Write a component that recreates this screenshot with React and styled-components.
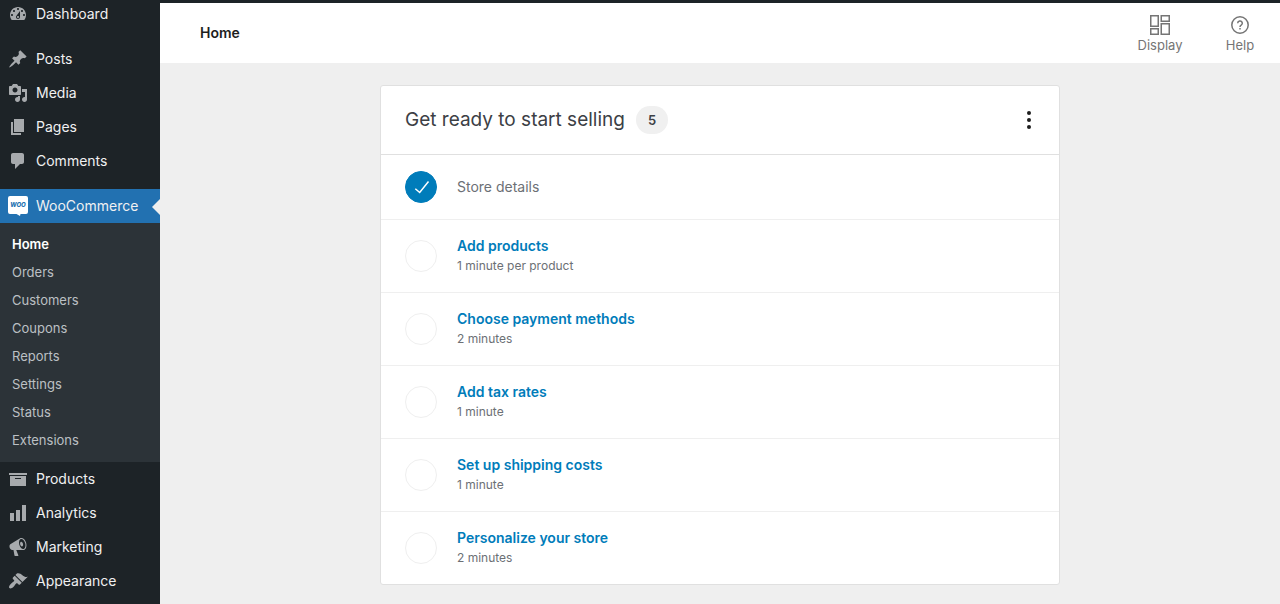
import React from 'react';
import styled, { createGlobalStyle } from 'styled-components';

const GlobalStyle = createGlobalStyle`
  * {
    box-sizing: border-box;
  }

  body {
    margin: 0;
    background: #efefef;
    font-family: Inter, "Liberation Sans", sans-serif;
  }
`;

// 20x20 menu icons
const icons = {
  dashboard: 'M3.76 16h12.48c1.1-1.37 1.76-3.11 1.76-5 0-4.42-3.58-8-8-8s-8 3.58-8 8c0 1.89.66 3.63 1.76 5zM10 4c.55 0 1 .45 1 1s-.45 1-1 1-1-.45-1-1 .45-1 1-1zM6 6c.55 0 1 .45 1 1s-.45 1-1 1-1-.45-1-1 .45-1 1-1zm8 0c.55 0 1 .45 1 1s-.45 1-1 1-1-.45-1-1 .45-1 1-1zm-5.37 5.55L12 7v6c0 1.1-.9 2-2 2s-2-.9-2-2c0-.57.24-1.08.63-1.45zM4 10c.55 0 1 .45 1 1s-.45 1-1 1-1-.45-1-1 .45-1 1-1zm12 0c.55 0 1 .45 1 1s-.45 1-1 1-1-.45-1-1 .45-1 1-1zm-5 3c0-.55-.45-1-1-1s-1 .45-1 1 .45 1 1 1 1-.45 1-1z',
  posts: 'M10.44 3.02l1.82-1.82 6.36 6.35-1.83 1.82c-1.05-.68-2.48-.57-3.41.36l-.75.75c-.92.93-1.04 2.35-.35 3.41l-1.83 1.82-2.41-2.41-2.8 2.79c-.42.42-3.38 2.71-3.8 2.29s1.86-3.39 2.28-3.81l2.79-2.79L4.1 9.36l1.83-1.82c1.05.69 2.48.57 3.4-.36l.75-.75c.93-.92 1.05-2.35.36-3.41z',
  media: 'M13 11V4c0-.55-.45-1-1-1h-1.67L9 1H5L3.67 3H2c-.55 0-1 .45-1 1v7c0 .55.45 1 1 1h10c.55 0 1-.45 1-1zM7 4.5c1.38 0 2.5 1.12 2.5 2.5S8.38 9.5 7 9.5 4.5 8.38 4.5 7 5.62 4.5 7 4.5zM14 6h5v10.5c0 1.38-1.12 2.5-2.5 2.5S14 17.88 14 16.5s1.12-2.5 2.5-2.5c.17 0 .34.02.5.05V9h-3V6zm-4 8.05V13h2v3.5c0 1.38-1.12 2.5-2.5 2.5S7 17.88 7 16.5 8.12 14 9.5 14c.17 0 .34.02.5.05z',
  pages: 'M6 15V2h10v13H6zm-1 1h8v2H3V5h2v11z',
  comments: 'M5 2h9c1.1 0 2 .9 2 2v7c0 1.1-.9 2-2 2h-2l-5 5v-5H5c-1.1 0-2-.9-2-2V4c0-1.1.9-2 2-2z',
  products: 'M19 4v2H1V4h18zM2 7h16v10H2V7zm11 3V9H7v1h6z',
  analytics: 'M18 18V2h-4v16h4zm-6 0V7H8v11h4zm-6 0v-8H2v8h4z',
  marketing: 'M18.15 5.94c.46 1.62.38 3.22-.02 4.48-.42 1.28-1.26 2.18-2.3 2.48-.16.06-.26.06-.4.06-.06.02-.12.02-.18.02-.06.02-.14.02-.22.02h-6.8l2.22 5.5c.02.14-.06.26-.14.34-.08.1-.24.16-.34.16H6.95c-.1 0-.26-.06-.34-.16-.08-.08-.16-.2-.14-.34l-1-5.5H4.25l-.02-.02c-.5.06-1.08-.18-1.54-.62s-.88-1.08-1.06-1.88c-.24-.8-.2-1.56-.02-2.2.18-.62.58-1.08 1.06-1.3l.02-.02 9-5.4c.1-.06.18-.1.24-.16.06-.04.14-.08.24-.12.16-.08.28-.12.5-.18 1.04-.3 2.24.1 3.22.98s1.84 2.24 2.26 3.86zm-2.58 5.98h-.02c.4-.1.74-.34 1.04-.7.58-.7.86-1.76.86-3.04 0-.64-.1-1.3-.28-1.98-.34-1.36-1.02-2.5-1.78-3.24s-1.68-1.1-2.46-.88c-.82.22-1.4.96-1.7 2-.32 1.04-.28 2.36.06 3.72.38 1.36 1 2.5 1.8 3.24.78.74 1.62 1.1 2.48.88zm-2.54-7.08c.22-.04.42-.02.62.04.38.16.76.48 1.02 1s.42 1.2.42 1.78c0 .3-.04.56-.12.8-.18.48-.44.84-.86.94-.34.1-.8-.06-1.14-.4s-.64-.86-.78-1.5c-.18-.62-.12-1.24.02-1.72s.48-.84.82-.94z',
  appearance: 'M14.48 11.06L7.41 3.99l1.5-1.5c.5-.56 2.3-.47 3.51.32 1.21.8 1.43 1.28 2.91 2.1 1.18.64 2.45 1.26 4.45.85zm-.71.71L6.7 4.7 4.93 6.47c-.39.39-.39 1.02 0 1.41l1.06 1.06c.39.39.39 1.03 0 1.42-.6.6-1.43 1.11-2.21 1.69-.35.26-.7.53-1.01.84C1.43 14.23.4 16.08 1.4 17.07c.99 1 2.84-.03 4.18-1.36.31-.31.58-.66.85-1.02.57-.78 1.08-1.61 1.69-2.21.39-.39 1.02-.39 1.41 0l1.06 1.06c.39.39 1.02.39 1.41 0z',
};

const contentMenu = [
  { label: 'Posts', icon: 'posts' },
  { label: 'Media', icon: 'media' },
  { label: 'Pages', icon: 'pages' },
  { label: 'Comments', icon: 'comments' },
];

const storeMenu = [
  { label: 'Products', icon: 'products' },
  { label: 'Analytics', icon: 'analytics' },
  { label: 'Marketing', icon: 'marketing' },
  { label: 'Appearance', icon: 'appearance' },
];

const wooMenu = ['Home', 'Orders', 'Customers', 'Coupons', 'Reports', 'Settings', 'Status', 'Extensions'];

const tasks = [
  { title: 'Store details', done: true },
  { title: 'Add products', time: '1 minute per product' },
  { title: 'Choose payment methods', time: '2 minutes' },
  { title: 'Add tax rates', time: '1 minute' },
  { title: 'Set up shipping costs', time: '1 minute' },
  { title: 'Personalize your store', time: '2 minutes' },
];

const MenuIcon = ({ name }) => (
  <svg width="20" height="20" viewBox="0 0 20 20" fill="#a7aaad" aria-hidden="true">
    <path d={icons[name]} />
  </svg>
);

const WooIcon = () => (
  <svg width="20" height="20" viewBox="0 0 20 20" aria-hidden="true">
    <path d="M2 0h16a2 2 0 0 1 2 2v14a2 2 0 0 1-2 2h-5.500l-.5 2-3.500-2H2a2 2 0 0 1-2-2V2a2 2 0 0 1 2-2z" fill="#fff" />
    <text x="10" y="11" textAnchor="middle" fontFamily="Inter, sans-serif" fontSize="6" fontWeight="800" fontStyle="italic" fill="#2271b1">WOO</text>
  </svg>
);

const DisplayIcon = () => (
  <svg width="20" height="20" viewBox="0 0 20 20" fill="none" stroke="#757575" strokeWidth="1.5" aria-hidden="true">
    <rect x="0.750" y="0.750" width="7.500" height="10.500" />
    <rect x="11.250" y="0.750" width="8" height="5.500" />
    <rect x="0.750" y="13.750" width="7.500" height="5.500" />
    <rect x="11.250" y="8.750" width="8" height="10.500" />
  </svg>
);

const HelpIcon = () => (
  <svg width="20" height="20" viewBox="0 0 20 20" fill="none" stroke="#757575" strokeWidth="1.500" aria-hidden="true">
    <circle cx="10" cy="10" r="8.200" />
    <path d="M7.700 8.300a2.300 2.300 0 1 1 3.500 1.900c-.8.500-1.200.9-1.200 1.800" />
    <path d="M10 13v1.500" />
  </svg>
);

const MenuRow = ({ label, icon }) => (
  <MenuLink href="#">
    <MenuIcon name={icon} />
    {label}
  </MenuLink>
);

const App = () => {
  return (
    <Page>
      <GlobalStyle />
      <Sidebar>
        <MenuGroup $first>
          <MenuRow label="Dashboard" icon="dashboard" />
        </MenuGroup>
        <MenuGroup>
          {contentMenu.map(item => (
            <MenuRow key={item.label} {...item} />
          ))}
        </MenuGroup>
        <MenuLink href="#" $active>
          <WooIcon />
          WooCommerce
        </MenuLink>
        <SubMenu>
          {wooMenu.map((label, i) => (
            <SubLink key={label} href="#" $current={i === 0}>{label}</SubLink>
          ))}
        </SubMenu>
        {storeMenu.map(item => (
          <MenuRow key={item.label} {...item} />
        ))}
      </Sidebar>
      <Main>
        <Header>
          <HeaderTitle>Home</HeaderTitle>
          <HeaderButton>
            <DisplayIcon />
            Display
          </HeaderButton>
          <HeaderButton>
            <HelpIcon />
            Help
          </HeaderButton>
        </Header>
        <Content>
          <Card>
            <CardHeader>
              <CardTitle>Get ready to start selling</CardTitle>
              <Badge>5</Badge>
              <MoreButton aria-label="Task list options">
                <svg width="24" height="24" viewBox="0 0 24 24" fill="#1e1e1e">
                  <circle cx="12" cy="5" r="2" />
                  <circle cx="12" cy="12" r="2" />
                  <circle cx="12" cy="19" r="2" />
                </svg>
              </MoreButton>
            </CardHeader>
            <TaskList>
              {tasks.map(task => (
                <Task key={task.title}>
                  <Status $done={task.done}>
                    {task.done && (
                      <svg width="24" height="24" viewBox="0 0 24 24" fill="none" stroke="#fff" strokeWidth="1.500">
                        <path d="M6.300 13.700l4.400 3.800L19.500 6.500" />
                      </svg>
                    )}
                  </Status>
                  <div>
                    {task.done ? <DoneTitle>{task.title}</DoneTitle> : <TaskLink href="#">{task.title}</TaskLink>}
                    {task.time && <TaskTime>{task.time}</TaskTime>}
                  </div>
                </Task>
              ))}
            </TaskList>
          </Card>
        </Content>
      </Main>
    </Page>
  );
};

// Styled components
const Page = styled.div`
  display: flex;
  min-height: 100vh;
`;

const Sidebar = styled.nav`
  flex: 0 0 160px;
  background: #1d2327;
`;

const MenuLink = styled.a`
  position: relative;
  display: flex;
  align-items: center;
  gap: 8px;
  height: 34px;
  padding: 0 8px;
  font-size: 14px;
  line-height: 18px;
  color: #f0f0f1;
  text-decoration: none;
  background: ${props => (props.$active ? '#2271b1' : 'transparent')};

  &::after {
    content: '';
    display: ${props => (props.$active ? 'block' : 'none')};
    position: absolute;
    right: 0;
    top: 10px;
    border: 8px solid transparent;
    border-left-width: 0;
    border-right-color: #efefef;
  }
`;

const MenuGroup = styled.div`
  margin-bottom: ${props => (props.$first ? '14px' : '11px')};

  ${MenuLink} {
    height: ${props => (props.$first ? '28px' : '34px')};
  }
`;

const SubMenu = styled.div`
  padding: 7px 0 8px;
  background: #2c3338;
`;

const SubLink = styled.a`
  display: block;
  padding: 0 12px;
  font-size: 13px;
  line-height: 28px;
  font-weight: ${props => (props.$current ? 600 : 400)};
  color: ${props => (props.$current ? '#fff' : '#bcc0c4')};
  text-decoration: none;
`;

const Main = styled.main`
  flex: 1;
  min-width: 0;
  border-top: 3px solid #1d2327;
`;

const Header = styled.header`
  display: flex;
  align-items: center;
  height: 60px;
  padding-left: 40px;
  background: #fff;
`;

const HeaderTitle = styled.h1`
  flex: 1;
  margin: 0;
  font-size: 14px;
  font-weight: 600;
  line-height: 18px;
  color: #1e1e1e;
`;

const HeaderButton = styled.button`
  display: flex;
  flex-direction: column;
  align-items: center;
  gap: 1px;
  width: 80px;
  padding: 3px 0 0;
  border: none;
  background: none;
  font-family: inherit;
  font-size: 13px;
  line-height: 18px;
  color: #757575;
  cursor: pointer;
`;

const Content = styled.div`
  padding: 22px 24px 20px;
`;

const Card = styled.section`
  max-width: 680px;
  margin: 0 auto;
  background: #fff;
  border: 1px solid #e0e0e0;
  border-radius: 3px;
`;

const CardHeader = styled.div`
  display: flex;
  align-items: center;
  height: 69px;
  padding: 0 18px 0 24px;
  border-bottom: 1px solid #e0e0e0;
`;

const CardTitle = styled.h2`
  margin: 0;
  font-size: 19px;
  font-weight: 400;
  line-height: 24px;
  color: #3c4045;
`;

const Badge = styled.span`
  margin-left: 11px;
  padding: 0 12px;
  border-radius: 14px;
  background: #f0f0f0;
  font-size: 13px;
  font-weight: 600;
  line-height: 28px;
  color: #3c4045;
`;

const MoreButton = styled.button`
  display: flex;
  margin-left: auto;
  padding: 0;
  border: none;
  background: none;
  cursor: pointer;
`;

const TaskList = styled.ul`
  margin: 0;
  padding: 0;
  list-style: none;
`;

const Task = styled.li`
  display: flex;
  align-items: center;
  gap: 20px;
  padding: 16px 24px;

  & + & {
    border-top: 1px solid #efefef;
  }
`;

const Status = styled.span`
  display: flex;
  align-items: center;
  justify-content: center;
  width: 32px;
  height: 32px;
  border: 1px solid ${props => (props.$done ? '#007cba' : '#efefef')};
  border-radius: 50%;
  background: ${props => (props.$done ? '#007cba' : '#fff')};
`;

const DoneTitle = styled.span`
  display: block;
  font-size: 14px;
  line-height: 20px;
  color: #6c7075;
`;

const TaskLink = styled.a`
  display: block;
  font-size: 14px;
  font-weight: 600;
  line-height: 20px;
  color: #007cba;
  text-decoration: none;
`;

const TaskTime = styled.div`
  font-size: 12px;
  line-height: 20px;
  color: #6c7075;
`;

export default App;
